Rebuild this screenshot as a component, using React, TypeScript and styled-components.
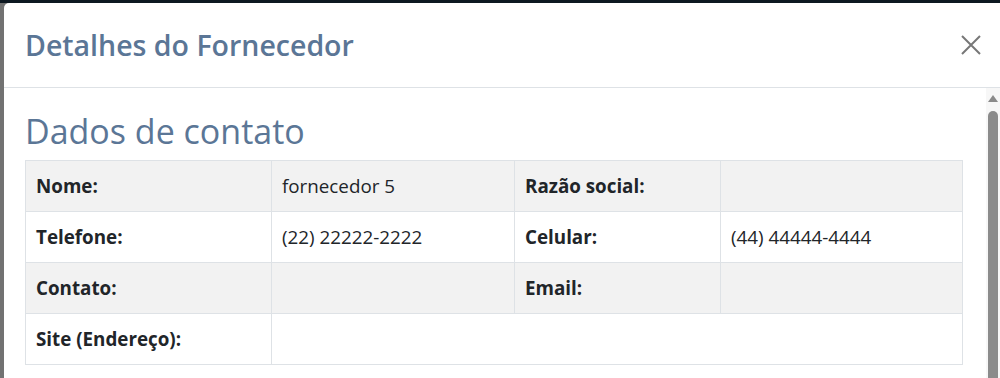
import React from "react";
import styled, { createGlobalStyle } from "styled-components";

const Global = createGlobalStyle`
  html, body { margin: 0; padding: 0; }
  body {
    width: 1000px;
    height: 378px;
    overflow: hidden;
    background: linear-gradient(#0d1821 0 3px, #727272 3px);
    font-family: "Open Sans", "Noto Sans", sans-serif;
  }
`;

const Backdrop = styled.div`
  display: flex;
  padding: 3px 0 0 4px;
  height: 378px;
  box-sizing: border-box;
`;

const Modal = styled.div`
  flex: 1;
  background: #fff;
  border-top-left-radius: 5px;
  display: flex;
  flex-direction: column;
  overflow: hidden;
`;

const Header = styled.div`
  height: 84px;
  border-bottom: 1px solid #dee2e6;
  display: flex;
  align-items: center;
  justify-content: space-between;
  padding: 0 16px 0 21px;
  flex-shrink: 0;
`;

const Title = styled.h1`
  margin: 0;
  font-size: 28.5px;
  font-weight: 550;
  color: #5b7696;
  padding-bottom: 1px;
`;

const Close = styled.button`
  border: 0;
  background: transparent;
  padding: 0;
  width: 26px;
  height: 26px;
  display: flex;
  align-items: center;
  justify-content: center;
  cursor: pointer;
`;

const BodyRow = styled.div`
  flex: 1;
  display: flex;
  min-height: 0;
`;

const Content = styled.div`
  flex: 1;
  padding: 23px 23px 0 21px;
`;

const Section = styled.h2`
  margin: 0 0 9px 0;
  font-size: 34px;
  line-height: 40px;
  font-weight: 500;
  color: #5b7696;
`;

const Scrollbar = styled.div`
  width: 15px;
  background: #f7f7f7;
  display: flex;
  flex-direction: column;
  align-items: center;
  padding-top: 7px;
  gap: 9px;
`;

const Arrow = styled.div`
  width: 0;
  height: 0;
  border-left: 5px solid transparent;
  border-right: 5px solid transparent;
  border-bottom: 7px solid #8a8a8a;
`;

const Thumb = styled.div`
  width: 10px;
  flex: 1;
  background: #8b8b8b;
  border-radius: 5px 5px 0 0;
`;

const Table = styled.table`
  border-collapse: collapse;
  width: 937px;
  table-layout: fixed;
  font-size: 18.8px;
  color: #212529;
`;

const Row = styled.tr<{ $striped: boolean }>`
  background: ${(p) => (p.$striped ? "#f2f2f2" : "#fff")};
  height: 51px;
`;

const Cell = styled.td<{ $label?: boolean }>`
  border: 1px solid #dee2e6;
  padding: 0 10px;
  font-weight: ${(p) => (p.$label ? 700 : 400)};
  vertical-align: middle;
  white-space: nowrap;
  line-height: 24px;
`;

type R = [string, string, string?, string?];
const rows: R[] = [
  ["Nome:", "fornecedor 5", "Razão social:", ""],
  ["Telefone:", "(22) 22222-2222", "Celular:", "(44) 44444-4444"],
  ["Contato:", "", "Email:", ""],
  ["Site (Endereço):", ""],
];

export default function App() {
  return (
    <>
      <Global />
      <Backdrop>
        <Modal>
          <Header>
            <Title>Detalhes do Fornecedor</Title>
            <Close aria-label="Fechar">
              <svg width="22" height="22" viewBox="0 0 22 22">
                <path d="M2 2 L20 20 M20 2 L2 20" stroke="#777" strokeWidth="2" fill="none" />
              </svg>
            </Close>
          </Header>
          <BodyRow>
            <Content>
              <Section>Dados de contato</Section>
              <Table>
                <colgroup>
                  <col style={{ width: 246 }} />
                  <col style={{ width: 243 }} />
                  <col style={{ width: 206 }} />
                  <col style={{ width: 242 }} />
                </colgroup>
                <tbody>
                  {rows.map((r, i) => (
                    <Row key={i} $striped={i % 2 === 0}>
                      <Cell $label>{r[0]}</Cell>
                      {r.length === 2 ? (
                        <Cell colSpan={3}>{r[1]}</Cell>
                      ) : (
                        <>
                          <Cell>{r[1]}</Cell>
                          <Cell $label>{r[2]}</Cell>
                          <Cell>{r[3]}</Cell>
                        </>
                      )}
                    </Row>
                  ))}
                </tbody>
              </Table>
            </Content>
            <Scrollbar>
              <Arrow />
              <Thumb />
            </Scrollbar>
          </BodyRow>
        </Modal>
      </Backdrop>
    </>
  );
}
